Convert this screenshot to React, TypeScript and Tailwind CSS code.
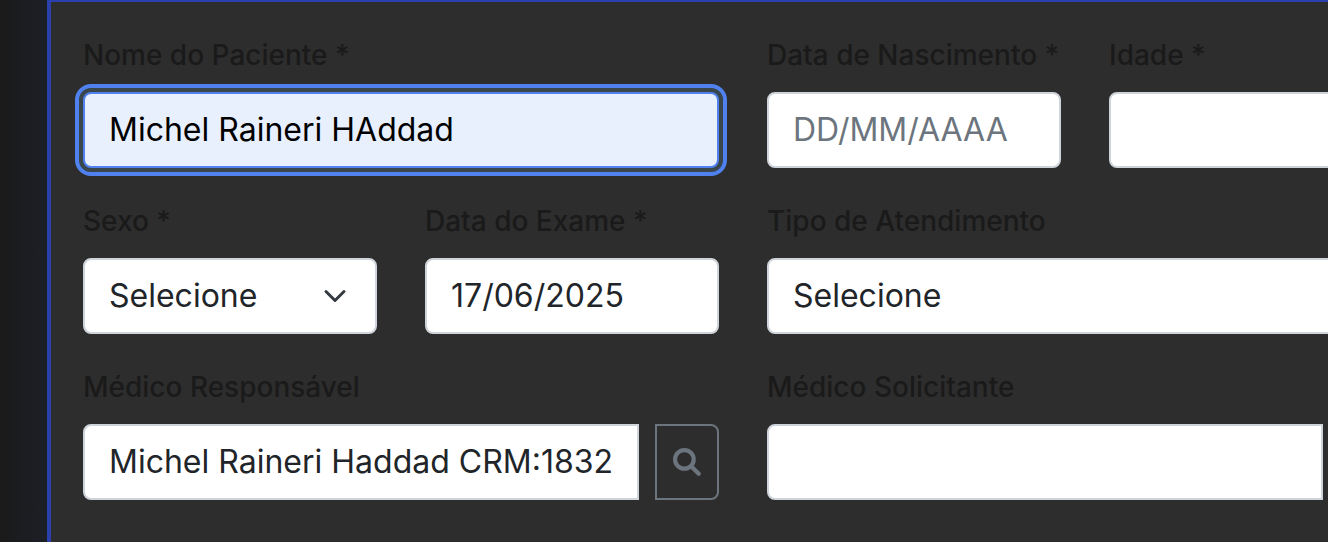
import type { ReactNode } from 'react';

const control =
  'h-19 w-full min-w-0 appearance-none border-2 border-[#ced4da] bg-white px-6 text-[32px] leading-12 font-normal text-[#212529] placeholder:text-[#6c757d] placeholder:opacity-100 outline-none';

const textInput = `${control} pb-0.5`;

function Field({ id, label, wide, children }: { id: string; label: string; wide?: boolean; children: ReactNode }) {
  return (
    <div className={wide ? 'col-span-2 min-w-0' : 'min-w-0'}>
      <label htmlFor={id} className="mb-4 block text-[28px] leading-[42px] font-medium whitespace-nowrap text-[#1a1a1a]">
        {label}
      </label>
      {children}
    </div>
  );
}

function Select({ id }: { id: string }) {
  return (
    <div className="relative">
      <select id={id} className={`${control} rounded-lg pr-18`}>
        <option>Selecione</option>
      </select>
      <svg
        viewBox="0 0 16 16"
        className="pointer-events-none absolute inset-y-0 right-[30px] my-auto size-6"
        fill="none"
        stroke="#343a40"
        strokeWidth="2"
        strokeLinecap="round"
        strokeLinejoin="round"
        aria-hidden="true"
      >
        <path d="m2 5 6 6 6-6" />
      </svg>
    </div>
  );
}

function SearchIcon() {
  return (
    <svg
      viewBox="0 0 28 28"
      className="size-7"
      fill="none"
      stroke="currentColor"
      strokeWidth="4.2"
      strokeLinecap="round"
      aria-hidden="true"
    >
      <circle cx="11.4" cy="11.4" r="9.3" />
      <path d="m18.2 18.2 7.5 7.5" />
    </svg>
  );
}

function SearchInput({ id, value, button }: { id: string; value?: string; button: string }) {
  return (
    <div className="flex gap-4">
      <input id={id} type="text" defaultValue={value} className={`${textInput} flex-1 rounded-l-lg`} />
      <button
        type="button"
        aria-label={button}
        className="flex h-19 w-16 shrink-0 items-center justify-center rounded-r-lg border-2 border-[#6c757d] text-[#6c757d]"
      >
        <SearchIcon />
      </button>
    </div>
  );
}

export default function App() {
  return (
    <div className="min-h-screen overflow-hidden bg-linear-to-r from-[#1a1a1a] to-[#1c1f26] to-[47px] pl-[47px] font-['Inter',sans-serif]">
      <form className="-mr-[111px] min-h-screen border-x-4 border-t-2 border-[#2a41ad] bg-[#2d2d2d] p-8">
        <div className="grid grid-cols-4 gap-x-12 gap-y-8">
          <Field id="nome" label="Nome do Paciente *" wide>
            <input
              id="nome"
              type="text"
              defaultValue="Michel Raineri HAddad"
              className="h-19 w-full rounded-lg border-2 border-[#4f82ef] bg-[#e8effd] px-6 pb-0.5 text-[32px] leading-12 text-black shadow-[0_0_0_4px_#39464c] outline-4 outline-offset-4 outline-[#4f82ef]"
            />
          </Field>
          <Field id="nascimento" label="Data de Nascimento *">
            <input id="nascimento" type="text" placeholder="DD/MM/AAAA" className={`${textInput} rounded-lg`} />
          </Field>
          <Field id="idade" label="Idade *">
            <input id="idade" type="text" className={`${textInput} rounded-lg`} />
          </Field>

          <Field id="sexo" label="Sexo *">
            <Select id="sexo" />
          </Field>
          <Field id="exame" label="Data do Exame *">
            <input id="exame" type="text" defaultValue="17/06/2025" className={`${textInput} rounded-lg`} />
          </Field>
          <Field id="atendimento" label="Tipo de Atendimento" wide>
            <Select id="atendimento" />
          </Field>

          <Field id="responsavel" label="Médico Responsável" wide>
            <SearchInput id="responsavel" value="Michel Raineri Haddad CRM:1832" button="Buscar médico responsável" />
          </Field>
          <Field id="solicitante" label="Médico Solicitante" wide>
            <SearchInput id="solicitante" button="Buscar médico solicitante" />
          </Field>
        </div>
      </form>
    </div>
  );
}
